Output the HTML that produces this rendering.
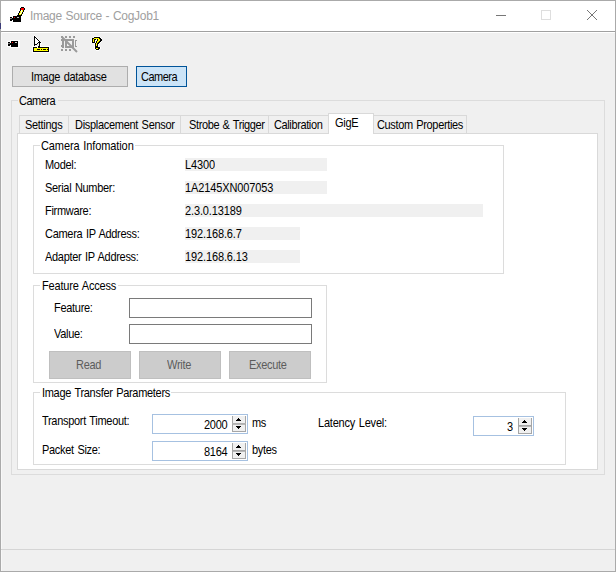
<!DOCTYPE html>
<html><head><meta charset="utf-8">
<style>
html,body{margin:0;padding:0;}
body{width:616px;height:572px;position:relative;overflow:hidden;background:#f0f0f0;font-family:"Liberation Sans",sans-serif;font-size:11px;color:#000;}
.a{position:absolute;}
.t{position:absolute;white-space:nowrap;line-height:11px;letter-spacing:-0.3px;word-spacing:0.8px;transform:scaleY(1.1);transform-origin:0 9.3px;}
.bx{position:absolute;box-sizing:border-box;}
.gb{position:absolute;box-sizing:border-box;border:1px solid #dcdcdc;}
.gl{position:absolute;background:#f0f0f0;padding:0 2px;white-space:nowrap;line-height:11px;letter-spacing:-0.25px;}
.wgl{position:absolute;background:#fff;padding:0 2px 0 2px;white-space:nowrap;line-height:11px;letter-spacing:-0.25px;}
.bar{position:absolute;background:#f0f0f0;height:13px;}
</style></head><body>
<!-- window frame -->
<div class="bx" style="left:0;top:0;width:616px;height:572px;border:1px solid #aaaaaa;"></div>
<div class="a" style="left:0;top:23px;width:1px;height:6px;background:#3c3c78;"></div>
<!-- title bar -->
<div class="a" style="left:1px;top:1px;width:614px;height:30px;background:#fff;"></div>
<div class="a" style="left:1px;top:31px;width:614px;height:1px;background:#a0a0a0;"></div>
<div class="a" style="left:1px;top:32px;width:614px;height:1px;background:#fff;"></div>
<div class="a" style="left:1px;top:32px;width:1px;height:539px;background:#f8f8f8;"></div>
<div class="t" style="left:30px;top:10px;font-size:12px;line-height:12px;color:#a0a0a0;letter-spacing:-0.3px;word-spacing:0.7px;transform:none;">Image Source - CogJob1</div>
<svg class="a" style="left:0;top:0" width="110" height="56" viewBox="0 0 110 56" shape-rendering="crispEdges">
<!-- title icon -->
<rect x="13" y="16" width="8" height="6" fill="#000"/>
<rect x="10" y="17" width="2" height="4" fill="#000"/>
<rect x="12" y="18" width="1" height="2" fill="#000"/>
<rect x="10" y="18" width="2" height="1" fill="#888"/>
<rect x="14" y="17" width="1" height="1" fill="#f00"/>
<rect x="17" y="17" width="2" height="1" fill="#bbb"/>
<rect x="21" y="7" width="1" height="1" fill="#000"/>
<rect x="22" y="7" width="1" height="1" fill="#000"/>
<rect x="23" y="7" width="1" height="1" fill="#000"/>
<rect x="20" y="8" width="1" height="1" fill="#000"/>
<rect x="21" y="8" width="1" height="1" fill="#f00"/>
<rect x="22" y="8" width="1" height="1" fill="#f00"/>
<rect x="23" y="8" width="1" height="1" fill="#f00"/>
<rect x="24" y="8" width="1" height="1" fill="#000"/>
<rect x="20" y="9" width="1" height="1" fill="#000"/>
<rect x="21" y="9" width="1" height="1" fill="#f00"/>
<rect x="22" y="9" width="1" height="1" fill="#f00"/>
<rect x="23" y="9" width="1" height="1" fill="#f00"/>
<rect x="24" y="9" width="1" height="1" fill="#000"/>
<rect x="20" y="10" width="1" height="1" fill="#000"/>
<rect x="21" y="10" width="1" height="1" fill="#fff"/>
<rect x="22" y="10" width="1" height="1" fill="#ff0"/>
<rect x="23" y="10" width="1" height="1" fill="#000"/>
<rect x="19" y="11" width="1" height="1" fill="#000"/>
<rect x="20" y="11" width="1" height="1" fill="#ff0"/>
<rect x="21" y="11" width="1" height="1" fill="#fff"/>
<rect x="22" y="11" width="1" height="1" fill="#ff0"/>
<rect x="23" y="11" width="1" height="1" fill="#000"/>
<rect x="19" y="12" width="1" height="1" fill="#000"/>
<rect x="20" y="12" width="1" height="1" fill="#ff0"/>
<rect x="21" y="12" width="1" height="1" fill="#fff"/>
<rect x="22" y="12" width="1" height="1" fill="#000"/>
<rect x="18" y="13" width="1" height="1" fill="#000"/>
<rect x="19" y="13" width="1" height="1" fill="#ff0"/>
<rect x="20" y="13" width="1" height="1" fill="#fff"/>
<rect x="21" y="13" width="1" height="1" fill="#ff0"/>
<rect x="22" y="13" width="1" height="1" fill="#000"/>
<rect x="18" y="14" width="1" height="1" fill="#000"/>
<rect x="19" y="14" width="1" height="1" fill="#ff0"/>
<rect x="20" y="14" width="1" height="1" fill="#ff0"/>
<rect x="21" y="14" width="1" height="1" fill="#000"/>
<rect x="17" y="15" width="1" height="1" fill="#000"/>
<rect x="18" y="15" width="1" height="1" fill="#000"/>
<rect x="19" y="15" width="1" height="1" fill="#000"/>
<rect x="20" y="15" width="1" height="1" fill="#000"/>
<rect x="21" y="15" width="1" height="1" fill="#000"/>
<!-- toolbar camera -->
<rect x="10" y="40" width="10" height="8" fill="#fff"/>
<rect x="7" y="41" width="4" height="6" fill="#fff"/>
<rect x="11" y="41" width="7" height="6" fill="#000"/>
<rect x="8" y="42" width="2" height="4" fill="#000"/>
<rect x="10" y="43" width="1" height="2" fill="#000"/>
<rect x="8" y="43" width="2" height="1" fill="#777"/>
<rect x="12" y="42" width="1" height="1" fill="#f00"/>
<rect x="15" y="42" width="2" height="1" fill="#ccc"/>
<!-- cursor + ruler -->
<rect x="32" y="46" width="18" height="7" fill="#fff"/>
<rect x="33" y="47" width="16" height="5" fill="#000"/>
<rect x="34" y="48" width="14" height="3" fill="#ff0"/>
<rect x="37" y="49" width="3" height="1" fill="#000"/>
<rect x="41" y="49" width="1" height="1" fill="#000"/>
<rect x="43" y="49" width="3" height="1" fill="#000"/>
<rect x="47" y="49" width="1" height="1" fill="#000"/>
<rect x="34" y="35" width="1" height="1" fill="#fff"/>
<rect x="35" y="36" width="1" height="1" fill="#fff"/>
<rect x="36" y="37" width="1" height="1" fill="#fff"/>
<rect x="37" y="38" width="1" height="1" fill="#fff"/>
<rect x="38" y="39" width="1" height="1" fill="#fff"/>
<rect x="39" y="40" width="1" height="1" fill="#fff"/>
<rect x="40" y="41" width="1" height="1" fill="#fff"/>
<rect x="41" y="42" width="1" height="1" fill="#fff"/>
<rect x="41" y="43" width="1" height="1" fill="#fff"/>
<rect x="40" y="43" width="1" height="1" fill="#fff"/>
<rect x="40" y="44" width="1" height="1" fill="#fff"/>
<rect x="40" y="45" width="1" height="1" fill="#fff"/>
<rect x="40" y="46" width="1" height="1" fill="#fff"/>
<rect x="33" y="36" width="1" height="1" fill="#fff"/>
<rect x="33" y="45" width="1" height="1" fill="#fff"/>
<rect x="35" y="46" width="1" height="1" fill="#fff"/>
<rect x="37" y="47" width="1" height="1" fill="#fff"/>
<rect x="35" y="38" width="1" height="1" fill="#fff"/>
<rect x="35" y="39" width="1" height="1" fill="#fff"/>
<rect x="36" y="39" width="1" height="1" fill="#fff"/>
<rect x="35" y="40" width="1" height="1" fill="#fff"/>
<rect x="36" y="40" width="1" height="1" fill="#fff"/>
<rect x="37" y="40" width="1" height="1" fill="#fff"/>
<rect x="35" y="41" width="1" height="1" fill="#fff"/>
<rect x="36" y="41" width="1" height="1" fill="#fff"/>
<rect x="37" y="41" width="1" height="1" fill="#fff"/>
<rect x="38" y="41" width="1" height="1" fill="#fff"/>
<rect x="35" y="42" width="1" height="1" fill="#fff"/>
<rect x="36" y="42" width="1" height="1" fill="#fff"/>
<rect x="37" y="42" width="1" height="1" fill="#fff"/>
<rect x="35" y="43" width="1" height="1" fill="#fff"/>
<rect x="36" y="43" width="1" height="1" fill="#fff"/>
<rect x="34" y="36" width="1" height="1" fill="#000"/>
<rect x="34" y="37" width="1" height="1" fill="#000"/>
<rect x="35" y="37" width="1" height="1" fill="#000"/>
<rect x="34" y="38" width="1" height="1" fill="#000"/>
<rect x="36" y="38" width="1" height="1" fill="#000"/>
<rect x="34" y="39" width="1" height="1" fill="#000"/>
<rect x="37" y="39" width="1" height="1" fill="#000"/>
<rect x="34" y="40" width="1" height="1" fill="#000"/>
<rect x="38" y="40" width="1" height="1" fill="#000"/>
<rect x="34" y="41" width="1" height="1" fill="#000"/>
<rect x="39" y="41" width="1" height="1" fill="#000"/>
<rect x="34" y="42" width="1" height="1" fill="#000"/>
<rect x="38" y="42" width="1" height="1" fill="#000"/>
<rect x="39" y="42" width="1" height="1" fill="#000"/>
<rect x="40" y="42" width="1" height="1" fill="#000"/>
<rect x="34" y="43" width="1" height="1" fill="#000"/>
<rect x="37" y="43" width="1" height="1" fill="#000"/>
<rect x="39" y="43" width="1" height="1" fill="#000"/>
<rect x="34" y="44" width="1" height="1" fill="#000"/>
<rect x="35" y="44" width="1" height="1" fill="#000"/>
<rect x="36" y="44" width="1" height="1" fill="#000"/>
<rect x="39" y="44" width="1" height="1" fill="#000"/>
<rect x="34" y="45" width="1" height="1" fill="#000"/>
<rect x="39" y="45" width="1" height="1" fill="#000"/>
<rect x="38" y="46" width="1" height="1" fill="#000"/>
<rect x="39" y="46" width="1" height="1" fill="#000"/>
<!-- disabled icon -->
<g fill="#9a9a9a">
<rect x="61" y="36" width="2" height="2"/><rect x="65" y="36" width="2" height="2"/><rect x="69" y="36" width="2" height="2"/><rect x="73" y="36" width="2" height="2"/>
<rect x="61" y="49" width="2" height="2"/><rect x="65" y="49" width="2" height="2"/><rect x="69" y="49" width="2" height="2"/>
<rect x="61" y="39" width="2" height="2"/><rect x="61" y="45" width="2" height="2"/>
<rect x="62" y="38" width="2" height="10"/>
<rect x="65" y="39" width="9" height="2"/><rect x="65" y="46" width="9" height="2"/>
<rect x="65" y="39" width="2" height="9"/><rect x="72" y="39" width="2" height="9"/>
<rect x="75" y="40" width="1" height="7"/><rect x="76" y="40" width="1" height="1"/><rect x="76" y="46" width="1" height="1"/>
</g>
<g shape-rendering="auto"><path d="M62 37 L77 52" stroke="#9a9a9a" stroke-width="2"/></g>
<!-- question mark -->
<rect x="94" y="36" width="1" height="1" fill="#fff"/>
<rect x="95" y="36" width="1" height="1" fill="#fff"/>
<rect x="96" y="36" width="1" height="1" fill="#fff"/>
<rect x="97" y="36" width="1" height="1" fill="#fff"/>
<rect x="98" y="36" width="1" height="1" fill="#fff"/>
<rect x="99" y="36" width="1" height="1" fill="#fff"/>
<rect x="93" y="37" width="1" height="1" fill="#fff"/>
<rect x="94" y="37" width="1" height="1" fill="#000"/>
<rect x="95" y="37" width="1" height="1" fill="#000"/>
<rect x="96" y="37" width="1" height="1" fill="#000"/>
<rect x="97" y="37" width="1" height="1" fill="#000"/>
<rect x="98" y="37" width="1" height="1" fill="#000"/>
<rect x="99" y="37" width="1" height="1" fill="#000"/>
<rect x="100" y="37" width="1" height="1" fill="#fff"/>
<rect x="91" y="38" width="1" height="1" fill="#fff"/>
<rect x="92" y="38" width="1" height="1" fill="#000"/>
<rect x="93" y="38" width="1" height="1" fill="#000"/>
<rect x="94" y="38" width="1" height="1" fill="#ff0"/>
<rect x="95" y="38" width="1" height="1" fill="#ff0"/>
<rect x="96" y="38" width="1" height="1" fill="#ff0"/>
<rect x="97" y="38" width="1" height="1" fill="#ff0"/>
<rect x="98" y="38" width="1" height="1" fill="#ff0"/>
<rect x="99" y="38" width="1" height="1" fill="#000"/>
<rect x="100" y="38" width="1" height="1" fill="#000"/>
<rect x="101" y="38" width="1" height="1" fill="#fff"/>
<rect x="91" y="39" width="1" height="1" fill="#fff"/>
<rect x="92" y="39" width="1" height="1" fill="#000"/>
<rect x="93" y="39" width="1" height="1" fill="#ff0"/>
<rect x="94" y="39" width="1" height="1" fill="#000"/>
<rect x="95" y="39" width="1" height="1" fill="#000"/>
<rect x="96" y="39" width="1" height="1" fill="#fff"/>
<rect x="97" y="39" width="1" height="1" fill="#000"/>
<rect x="98" y="39" width="1" height="1" fill="#ff0"/>
<rect x="99" y="39" width="1" height="1" fill="#ff0"/>
<rect x="100" y="39" width="1" height="1" fill="#000"/>
<rect x="101" y="39" width="1" height="1" fill="#000"/>
<rect x="91" y="40" width="1" height="1" fill="#fff"/>
<rect x="92" y="40" width="1" height="1" fill="#000"/>
<rect x="93" y="40" width="1" height="1" fill="#ff0"/>
<rect x="94" y="40" width="1" height="1" fill="#000"/>
<rect x="95" y="40" width="1" height="1" fill="#fff"/>
<rect x="96" y="40" width="1" height="1" fill="#fff"/>
<rect x="97" y="40" width="1" height="1" fill="#000"/>
<rect x="98" y="40" width="1" height="1" fill="#ff0"/>
<rect x="99" y="40" width="1" height="1" fill="#ff0"/>
<rect x="100" y="40" width="1" height="1" fill="#000"/>
<rect x="101" y="40" width="1" height="1" fill="#000"/>
<rect x="91" y="41" width="1" height="1" fill="#fff"/>
<rect x="92" y="41" width="1" height="1" fill="#000"/>
<rect x="93" y="41" width="1" height="1" fill="#ff0"/>
<rect x="94" y="41" width="1" height="1" fill="#000"/>
<rect x="95" y="41" width="1" height="1" fill="#fff"/>
<rect x="96" y="41" width="1" height="1" fill="#000"/>
<rect x="97" y="41" width="1" height="1" fill="#ff0"/>
<rect x="98" y="41" width="1" height="1" fill="#ff0"/>
<rect x="99" y="41" width="1" height="1" fill="#000"/>
<rect x="100" y="41" width="1" height="1" fill="#000"/>
<rect x="101" y="41" width="1" height="1" fill="#fff"/>
<rect x="91" y="42" width="1" height="1" fill="#fff"/>
<rect x="92" y="42" width="1" height="1" fill="#000"/>
<rect x="93" y="42" width="1" height="1" fill="#000"/>
<rect x="94" y="42" width="1" height="1" fill="#000"/>
<rect x="95" y="42" width="1" height="1" fill="#fff"/>
<rect x="96" y="42" width="1" height="1" fill="#000"/>
<rect x="97" y="42" width="1" height="1" fill="#ff0"/>
<rect x="98" y="42" width="1" height="1" fill="#000"/>
<rect x="99" y="42" width="1" height="1" fill="#000"/>
<rect x="100" y="42" width="1" height="1" fill="#fff"/>
<rect x="94" y="43" width="1" height="1" fill="#fff"/>
<rect x="95" y="43" width="1" height="1" fill="#000"/>
<rect x="96" y="43" width="1" height="1" fill="#ff0"/>
<rect x="97" y="43" width="1" height="1" fill="#000"/>
<rect x="98" y="43" width="1" height="1" fill="#000"/>
<rect x="99" y="43" width="1" height="1" fill="#fff"/>
<rect x="94" y="44" width="1" height="1" fill="#fff"/>
<rect x="95" y="44" width="1" height="1" fill="#000"/>
<rect x="96" y="44" width="1" height="1" fill="#ff0"/>
<rect x="97" y="44" width="1" height="1" fill="#000"/>
<rect x="98" y="44" width="1" height="1" fill="#fff"/>
<rect x="94" y="45" width="1" height="1" fill="#fff"/>
<rect x="95" y="45" width="1" height="1" fill="#000"/>
<rect x="96" y="45" width="1" height="1" fill="#ff0"/>
<rect x="97" y="45" width="1" height="1" fill="#000"/>
<rect x="98" y="45" width="1" height="1" fill="#fff"/>
<rect x="94" y="46" width="1" height="1" fill="#fff"/>
<rect x="95" y="46" width="1" height="1" fill="#000"/>
<rect x="96" y="46" width="1" height="1" fill="#000"/>
<rect x="97" y="46" width="1" height="1" fill="#000"/>
<rect x="98" y="46" width="1" height="1" fill="#fff"/>
<rect x="94" y="47" width="1" height="1" fill="#fff"/>
<rect x="95" y="47" width="1" height="1" fill="#000"/>
<rect x="96" y="47" width="1" height="1" fill="#000"/>
<rect x="97" y="47" width="1" height="1" fill="#000"/>
<rect x="98" y="47" width="1" height="1" fill="#000"/>
<rect x="99" y="47" width="1" height="1" fill="#000"/>
<rect x="100" y="47" width="1" height="1" fill="#fff"/>
<rect x="94" y="48" width="1" height="1" fill="#fff"/>
<rect x="95" y="48" width="1" height="1" fill="#000"/>
<rect x="96" y="48" width="1" height="1" fill="#ff0"/>
<rect x="97" y="48" width="1" height="1" fill="#ff0"/>
<rect x="98" y="48" width="1" height="1" fill="#000"/>
<rect x="99" y="48" width="1" height="1" fill="#000"/>
<rect x="100" y="48" width="1" height="1" fill="#fff"/>
<rect x="95" y="49" width="1" height="1" fill="#fff"/>
<rect x="96" y="49" width="1" height="1" fill="#000"/>
<rect x="97" y="49" width="1" height="1" fill="#000"/>
<rect x="98" y="49" width="1" height="1" fill="#000"/>
<rect x="99" y="49" width="1" height="1" fill="#fff"/>
<rect x="96" y="50" width="1" height="1" fill="#fff"/>
<rect x="97" y="50" width="1" height="1" fill="#fff"/>
<rect x="98" y="50" width="1" height="1" fill="#fff"/>
</svg>
<!-- window buttons -->
<div class="a" style="left:496px;top:15px;width:10px;height:1px;background:#777;"></div>
<div class="bx" style="left:541px;top:10px;width:10px;height:10px;border:1px solid #dedede;"></div>
<svg class="a" style="left:0;top:0" width="616" height="30" viewBox="0 0 616 30" shape-rendering="crispEdges" fill="#767676"><rect x="587" y="10" width="1" height="1"/><rect x="596" y="10" width="1" height="1"/><rect x="588" y="11" width="1" height="1"/><rect x="595" y="11" width="1" height="1"/><rect x="589" y="12" width="1" height="1"/><rect x="594" y="12" width="1" height="1"/><rect x="590" y="13" width="1" height="1"/><rect x="593" y="13" width="1" height="1"/><rect x="591" y="14" width="1" height="1"/><rect x="592" y="14" width="1" height="1"/><rect x="592" y="15" width="1" height="1"/><rect x="591" y="15" width="1" height="1"/><rect x="593" y="16" width="1" height="1"/><rect x="590" y="16" width="1" height="1"/><rect x="594" y="17" width="1" height="1"/><rect x="589" y="17" width="1" height="1"/><rect x="595" y="18" width="1" height="1"/><rect x="588" y="18" width="1" height="1"/><rect x="596" y="19" width="1" height="1"/><rect x="587" y="19" width="1" height="1"/></svg>

<!-- bottom separator -->
<div class="a" style="left:1px;top:549px;width:614px;height:1px;background:#d5d5d5;"></div>

<!-- top buttons -->
<div class="bx" style="left:12px;top:66px;width:116px;height:21px;border:1px solid #adadad;background:#e1e1e1;"></div>
<div class="t" style="left:31px;top:72px;">Image database</div>
<div class="bx" style="left:136px;top:66px;width:51px;height:21px;border:1px solid #005499;background:#cce4f7;"></div>
<div class="t" style="left:141px;top:72px;letter-spacing:-0.5px;">Camera</div>

<!-- Camera group -->
<div class="gb" style="left:11px;top:100px;width:594px;height:375px;"></div>
<div class="a" style="left:18px;top:99px;width:40px;height:3px;background:#f0f0f0;"></div><div class="t" style="left:19px;top:96px;letter-spacing:-0.5px;">Camera</div>

<!-- tabs -->
<div class="bx" style="left:17px;top:133px;width:581px;height:337px;border:1px solid #d9d9d9;background:#fff;"></div>
<div class="bx" style="left:19px;top:115px;width:50px;height:19px;border:1px solid #d9d9d9;background:#f0f0f0;"></div>
<div class="bx" style="left:68px;top:115px;width:113px;height:19px;border:1px solid #d9d9d9;background:#f0f0f0;"></div>
<div class="bx" style="left:180px;top:115px;width:90px;height:19px;border:1px solid #d9d9d9;background:#f0f0f0;"></div>
<div class="bx" style="left:268px;top:115px;width:61px;height:19px;border:1px solid #d9d9d9;background:#f0f0f0;"></div>
<div class="bx" style="left:373px;top:115px;width:94px;height:19px;border:1px solid #d9d9d9;background:#f0f0f0;"></div>
<div class="bx" style="left:328px;top:113px;width:46px;height:21px;border:1px solid #d9d9d9;border-bottom:none;background:#fff;"></div>
<div class="a" style="left:329px;top:133px;width:44px;height:2px;background:#fff;"></div>
<div class="t" style="left:25px;top:120px;">Settings</div>
<div class="t" style="left:75px;top:120px;">Displacement Sensor</div>
<div class="t" style="left:189px;top:120px;letter-spacing:-0.38px;">Strobe &amp; Trigger</div>
<div class="t" style="left:274px;top:120px;letter-spacing:-0.38px;">Calibration</div>
<div class="t" style="left:335px;top:118px;">GigE</div>
<div class="t" style="left:377px;top:120px;letter-spacing:-0.35px;">Custom Properties</div>

<!-- Camera Information -->
<div class="gb" style="left:33px;top:145px;width:471px;height:129px;"></div>
<div class="a" style="left:40px;top:144px;width:95px;height:3px;background:#fff;"></div><div class="t" style="left:41px;top:141px;letter-spacing:-0.1px;">Camera Infomation</div>
<div class="t" style="left:45px;top:160px;">Model:</div>
<div class="t" style="left:45px;top:183px;">Serial Number:</div>
<div class="t" style="left:45px;top:206px;">Firmware:</div>
<div class="t" style="left:45px;top:229px;">Camera IP Address:</div>
<div class="t" style="left:45px;top:252px;">Adapter IP Address:</div>
<div class="bar" style="left:185px;top:158px;width:142px;"></div>
<div class="bar" style="left:185px;top:181px;width:142px;"></div>
<div class="bar" style="left:185px;top:204px;width:298px;"></div>
<div class="bar" style="left:185px;top:227px;width:115px;"></div>
<div class="bar" style="left:185px;top:250px;width:115px;"></div>
<div class="t" style="left:185px;top:160px;letter-spacing:-0.12px;">L4300</div>
<div class="t" style="left:185px;top:183px;letter-spacing:-0.12px;">1A2145XN007053</div>
<div class="t" style="left:185px;top:206px;letter-spacing:-0.12px;">2.3.0.13189</div>
<div class="t" style="left:185px;top:229px;letter-spacing:-0.12px;">192.168.6.7</div>
<div class="t" style="left:185px;top:252px;letter-spacing:-0.12px;">192.168.6.13</div>

<!-- Feature Access -->
<div class="gb" style="left:33px;top:285px;width:294px;height:98px;"></div>
<div class="a" style="left:40px;top:284px;width:78px;height:3px;background:#fff;"></div><div class="t" style="left:42px;top:281px;letter-spacing:-0.18px;">Feature Access</div>
<div class="t" style="left:54px;top:303px;">Feature:</div>
<div class="t" style="left:54px;top:329px;">Value:</div>
<div class="bx" style="left:129px;top:298px;width:183px;height:20px;border:1px solid #7a7a7a;background:#fff;"></div>
<div class="bx" style="left:129px;top:324px;width:183px;height:20px;border:1px solid #7a7a7a;background:#fff;"></div>
<div class="bx" style="left:49px;top:351px;width:82px;height:28px;border:1px solid #bfbfbf;background:#cccccc;"></div>
<div class="bx" style="left:139px;top:351px;width:82px;height:28px;border:1px solid #bfbfbf;background:#cccccc;"></div>
<div class="bx" style="left:229px;top:351px;width:82px;height:28px;border:1px solid #bfbfbf;background:#cccccc;"></div>
<div class="t" style="left:76px;top:360px;color:#5c5c5c;">Read</div>
<div class="t" style="left:167px;top:360px;color:#5c5c5c;">Write</div>
<div class="t" style="left:249px;top:360px;color:#5c5c5c;">Execute</div>

<!-- Image Transfer Parameters -->
<div class="gb" style="left:33px;top:392px;width:533px;height:73px;"></div>
<div class="a" style="left:40px;top:391px;width:131px;height:3px;background:#fff;"></div><div class="t" style="left:42px;top:388px;">Image Transfer Parameters</div>
<div class="t" style="left:42px;top:416px;">Transport Timeout:</div>
<div class="t" style="left:42px;top:445px;">Packet Size:</div>
<div class="t" style="left:318px;top:418px;letter-spacing:-0.2px;">Latency Level:</div>

<div class="bx" style="left:152px;top:414px;width:96px;height:20px;border:1px solid #a6c1e1;background:#fff;"></div>
<div class="t" style="left:204px;top:420px;">2000</div>
<div class="bx" style="left:152px;top:441px;width:96px;height:20px;border:1px solid #a6c1e1;background:#fff;"></div>
<div class="t" style="left:204px;top:447px;">8164</div>
<div class="bx" style="left:473px;top:416px;width:61px;height:20px;border:1px solid #a6c1e1;background:#fff;"></div>
<div class="t" style="left:507px;top:422px;">3</div>
<div class="t" style="left:252px;top:418px;">ms</div>
<div class="t" style="left:252px;top:445px;">bytes</div>
<svg class="a" style="left:0;top:0" width="616" height="572" viewBox="0 0 616 572" shape-rendering="crispEdges">
<rect x="232" y="416" width="14" height="16" fill="#f0f0f0"/>
<rect x="232" y="416" width="1" height="16" fill="#a6a6a6"/>
<rect x="245" y="416" width="1" height="16" fill="#a6a6a6"/>
<rect x="232" y="431" width="14" height="1" fill="#a6a6a6"/>
<rect x="232" y="423" width="14" height="1" fill="#b0b0b0"/>
<rect x="233" y="424" width="12" height="1" fill="#b8b8b8"/>
<rect x="238" y="418" width="1" height="1" fill="#000"/>
<rect x="237" y="419" width="3" height="1" fill="#000"/>
<rect x="236" y="420" width="5" height="1" fill="#000"/>
<rect x="236" y="426" width="5" height="1" fill="#000"/>
<rect x="237" y="427" width="3" height="1" fill="#000"/>
<rect x="238" y="428" width="1" height="1" fill="#000"/>
<rect x="232" y="443" width="14" height="16" fill="#f0f0f0"/>
<rect x="232" y="443" width="1" height="16" fill="#a6a6a6"/>
<rect x="245" y="443" width="1" height="16" fill="#a6a6a6"/>
<rect x="232" y="458" width="14" height="1" fill="#a6a6a6"/>
<rect x="232" y="450" width="14" height="1" fill="#a6a6a6"/>
<rect x="233" y="451" width="12" height="1" fill="#b8b8b8"/>
<rect x="238" y="445" width="1" height="1" fill="#000"/>
<rect x="237" y="446" width="3" height="1" fill="#000"/>
<rect x="236" y="447" width="5" height="1" fill="#000"/>
<rect x="236" y="453" width="5" height="1" fill="#000"/>
<rect x="237" y="454" width="3" height="1" fill="#000"/>
<rect x="238" y="455" width="1" height="1" fill="#000"/>
<rect x="518" y="418" width="14" height="16" fill="#f0f0f0"/>
<rect x="518" y="418" width="1" height="16" fill="#a6a6a6"/>
<rect x="531" y="418" width="1" height="16" fill="#a6a6a6"/>
<rect x="518" y="433" width="14" height="1" fill="#a6a6a6"/>
<rect x="518" y="425" width="14" height="1" fill="#a6a6a6"/>
<rect x="519" y="426" width="12" height="1" fill="#b8b8b8"/>
<rect x="524" y="420" width="1" height="1" fill="#000"/>
<rect x="523" y="421" width="3" height="1" fill="#000"/>
<rect x="522" y="422" width="5" height="1" fill="#000"/>
<rect x="522" y="428" width="5" height="1" fill="#000"/>
<rect x="523" y="429" width="3" height="1" fill="#000"/>
<rect x="524" y="430" width="1" height="1" fill="#000"/>
</svg>
</body></html>
